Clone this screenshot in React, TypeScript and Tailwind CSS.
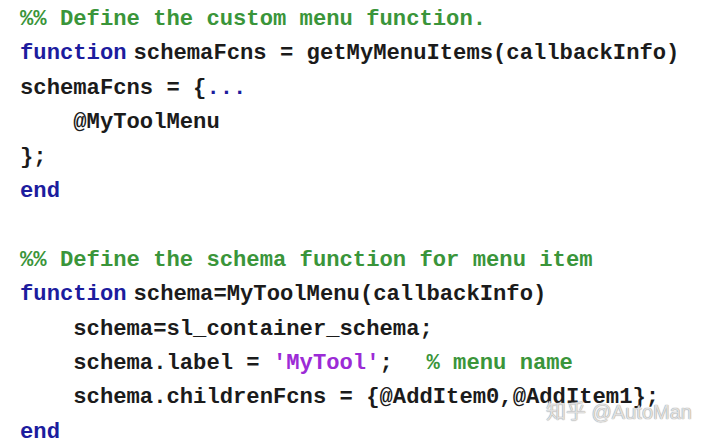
import * as React from 'react'

type Tok = { t: string; c?: 'kw' | 'cm' | 'str' | 'gap' }

const lines: Tok[][] = [
  [{ t: '%% Define the custom menu function.', c: 'cm' }],
  [{ t: 'function', c: 'kw' }, { t: ' ', c: 'gap' }, { t: 'schemaFcns = getMyMenuItems(callbackInfo)' }],
  [{ t: 'schemaFcns = {' }, { t: '...', c: 'kw' }],
  [{ t: '    @MyToolMenu' }],
  [{ t: '};' }],
  [{ t: 'end', c: 'kw' }],
  [],
  [{ t: '%% Define the schema function for menu item', c: 'cm' }],
  [{ t: 'function', c: 'kw' }, { t: ' ', c: 'gap' }, { t: 'schema=MyToolMenu(callbackInfo)' }],
  [{ t: '    schema=sl_container_schema;' }],
  [{ t: '    schema.label = ' }, { t: "'MyTool'", c: 'str' }, { t: ';  ' }, { t: ' ', c: 'gap' }, { t: '% menu name', c: 'cm' }],
  [{ t: '    schema.childrenFcns = {@AddItem0,@AddItem1};' }],
  [{ t: 'end', c: 'kw' }],
]

function Token({ tok }: { tok: Tok }) {
  if (tok.c === 'gap') return <span className="inline-block w-[7px]" />
  const color =
    tok.c === 'kw'
      ? 'text-[#1c1c9e]'
      : tok.c === 'cm'
        ? 'text-[#3a953a]'
        : tok.c === 'str'
          ? 'text-[#9c2bd6]'
          : 'text-[#1b1b1b]'
  return <span className={color}>{tok.t}</span>
}

export default function App() {
  return (
    <div className="relative h-[442px] w-[720px] overflow-hidden bg-white">
      <pre
        className="pl-[20px] pt-[3px] text-[22.2px] leading-[34.4px] font-bold whitespace-pre"
        style={{ fontFamily: '"Liberation Mono", "Courier New", monospace' }}
      >
        {lines.map((line, i) => (
          <div key={i} className="h-[34.4px]">
            {line.map((tok, j) => (
              <Token key={j} tok={tok} />
            ))}
          </div>
        ))}
      </pre>

      <div
        className="absolute left-[546px] top-[400px] text-[20px] leading-[24px] text-white/70 [text-shadow:0_0_1px_#9a9a9a,0_0_1px_#9a9a9a]"
        style={{ fontFamily: '"Liberation Sans", "Noto Sans CJK SC", sans-serif' }}
      >
        知乎 @AutoMan
      </div>
    </div>
  )
}
